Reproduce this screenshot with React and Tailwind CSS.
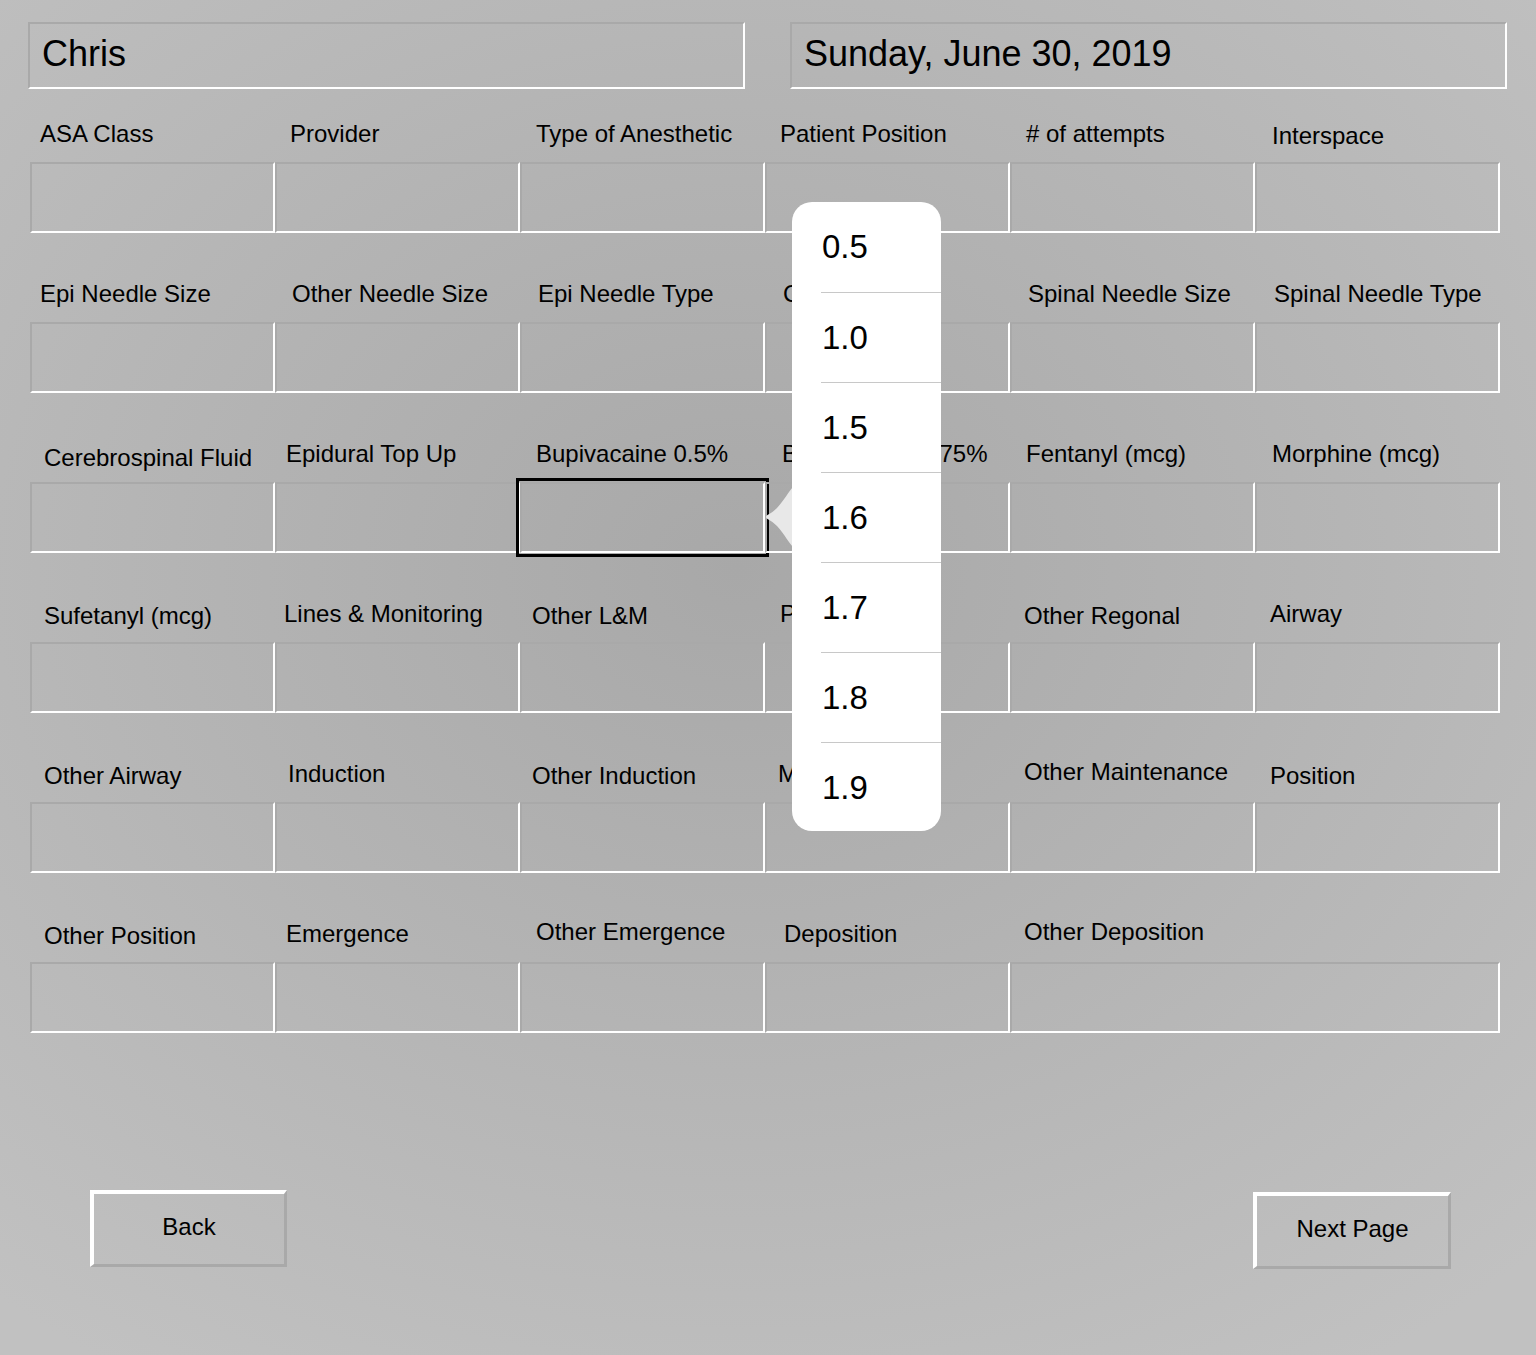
const rows = [
  [
    { label: 'ASA Class', cls: 'pl-[10px]' },
    { label: 'Provider', cls: 'pl-[15px]' },
    { label: 'Type of Anesthetic', cls: 'pl-[16px]' },
    { label: 'Patient Position', cls: 'pl-[15px]' },
    { label: '# of attempts', cls: 'pl-[16px]' },
    { label: 'Interspace', cls: 'pl-[17px] mt-[2px]' },
  ],
  [
    { label: 'Epi Needle Size', cls: 'pl-[10px]' },
    { label: 'Other Needle Size', cls: 'pl-[17px]' },
    { label: 'Epi Needle Type', cls: 'pl-[18px]' },
    { label: 'Catheter', cls: 'pl-[18px]' },
    { label: 'Spinal Needle Size', cls: 'pl-[18px]' },
    { label: 'Spinal Needle Type', cls: 'pl-[19px]' },
  ],
  [
    { label: 'Cerebrospinal Fluid', cls: 'pl-[14px] mt-[4px]' },
    { label: 'Epidural Top Up', cls: 'pl-[11px]' },
    { label: 'Bupivacaine 0.5%', cls: 'pl-[16px]', focused: true },
    { label: 'Bupivacaine 0.75%', cls: 'pl-[17px]' },
    { label: 'Fentanyl (mcg)', cls: 'pl-[16px]' },
    { label: 'Morphine (mcg)', cls: 'pl-[17px]' },
  ],
  [
    { label: 'Sufetanyl (mcg)', cls: 'pl-[14px] mt-[2px]' },
    { label: 'Lines & Monitoring', cls: 'pl-[9px]' },
    { label: 'Other L&M', cls: 'pl-[12px] mt-[2px]' },
    { label: 'Peripheral', cls: 'pl-[15px]' },
    { label: 'Other Regonal', cls: 'pl-[14px] mt-[2px]' },
    { label: 'Airway', cls: 'pl-[15px]' },
  ],
  [
    { label: 'Other Airway', cls: 'pl-[14px] mt-[2px]' },
    { label: 'Induction', cls: 'pl-[13px]' },
    { label: 'Other Induction', cls: 'pl-[12px] mt-[2px]' },
    { label: 'Maintenance', cls: 'pl-[13px]' },
    { label: 'Other Maintenance', cls: 'pl-[14px] -mt-[2px]' },
    { label: 'Position', cls: 'pl-[15px] mt-[2px]' },
  ],
  [
    { label: 'Other Position', cls: 'pl-[14px] mt-[2px]' },
    { label: 'Emergence', cls: 'pl-[11px]' },
    { label: 'Other Emergence', cls: 'pl-[16px] -mt-[2px]' },
    { label: 'Deposition', cls: 'pl-[19px]' },
    { label: 'Other Deposition', cls: 'pl-[14px] -mt-[2px]', wide: true },
  ],
];

const options = ['0.5', '1.0', '1.5', '1.6', '1.7', '1.8', '1.9'];

function Field({ label, cls, focused, wide }) {
  return (
    <div className={wide ? 'col-span-2 flex flex-col' : 'flex flex-col'}>
      <div className="h-[42px]">
        <div className={`text-[24px] leading-7 whitespace-nowrap ${cls}`}>{label}</div>
      </div>
      <div
        className={`h-[71px] border-t-2 border-l-2 border-t-[#a9a9a9] border-l-[#a9a9a9] border-r-2 border-b-2 border-r-white border-b-white ${
          focused ? 'outline-3 outline-offset-[1px] outline-black' : ''
        }`}
      />
    </div>
  );
}

export default function App() {
  return (
    <div
      className="relative w-full min-h-[1355px] text-black bg-[radial-gradient(ellipse_75%_70%_at_48%_42%,#a8a8a8_0%,#b3b3b3_45%,#c1c1c1_100%)]"
      style={{ fontFamily: '"Liberation Sans", Arial, sans-serif' }}
    >
      {/* header */}
      <div className="flex gap-[45px] pl-[28px] pt-[22px]">
        <div className="w-[717px] h-[67px] flex items-center pl-[12px] pb-[4px] text-[36px] border-t-2 border-l-2 border-t-[#a9a9a9] border-l-[#a9a9a9] border-r-2 border-b-2 border-r-white border-b-white">
          Chris
        </div>
        <div className="w-[717px] h-[67px] flex items-center pl-[12px] pb-[4px] text-[36px] border-t-2 border-l-2 border-t-[#a9a9a9] border-l-[#a9a9a9] border-r-2 border-b-2 border-r-white border-b-white">
          Sunday, June 30, 2019
        </div>
      </div>

      {/* form grid */}
      <div className="pl-[30px] w-[1500px] pt-[31px] flex flex-col gap-[47px]">
        {rows.map((row, i) => (
          <div key={i} className="grid grid-cols-6">
            {row.map((f) => (
              <Field key={f.label} {...f} />
            ))}
          </div>
        ))}
      </div>

      {/* buttons */}
      <div className="flex justify-between pl-[90px] pr-[85px] mt-[157px]">
        <button className="w-[197px] h-[77px] pb-[4px] text-[24px] border-t-4 border-l-4 border-t-white border-l-white border-r-[3px] border-b-[3px] border-r-[#a9a9a9] border-b-[#a9a9a9]">
          Back
        </button>
        <button className="w-[198px] h-[77px] mt-[2px] pb-[4px] text-[24px] border-t-4 border-l-4 border-t-white border-l-white border-r-[3px] border-b-[3px] border-r-[#a9a9a9] border-b-[#a9a9a9]">
          Next Page
        </button>
      </div>

      {/* picker popover */}
      <div className="absolute left-[765px] top-[202px] flex items-start">
        <svg width="28" height="60" viewBox="0 0 28 60" className="mt-[285px] -mr-px">
          <path
            d="M28 0 C24 4 20 12 12 21 C6 27 1 28 1 30 C1 32 6 33 12 39 C20 48 24 56 28 60 Z"
            fill="#e8e8e8"
          />
        </svg>
        <div className="w-[149px] h-[629px] bg-white rounded-[20px] overflow-hidden flex flex-col">
          {options.map((o, i) => (
            <div key={o} className="h-[90px] shrink-0 flex flex-col">
              {i > 0 && <div className="ml-[29px] h-px bg-[#c8c8c8]" />}
              <div className="flex-1 flex items-center pl-[30px] text-[33px]">{o}</div>
            </div>
          ))}
        </div>
      </div>
    </div>
  );
}
